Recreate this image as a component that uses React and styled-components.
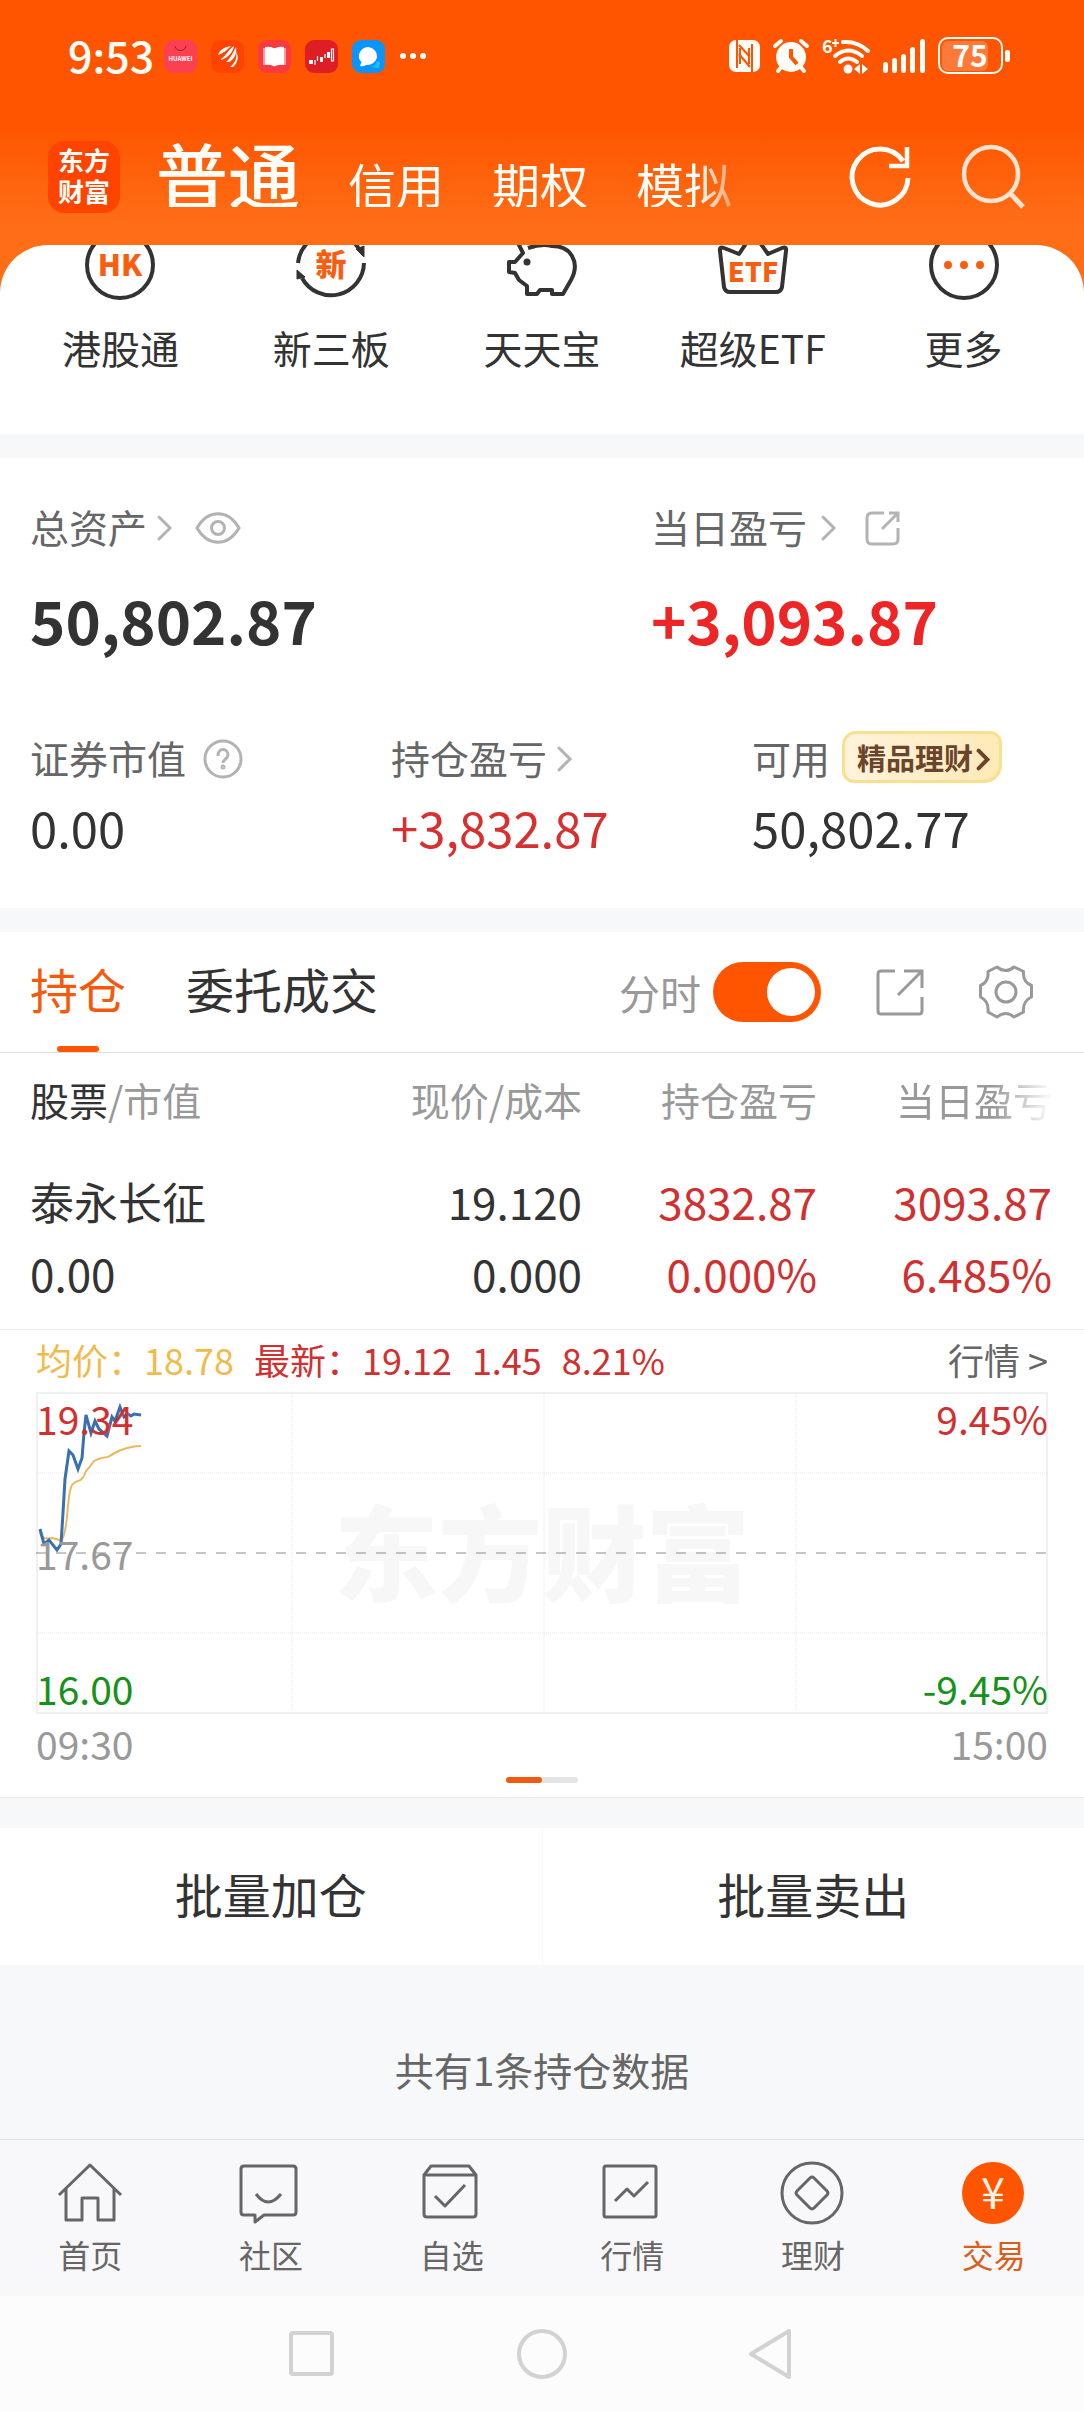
import { useState } from "react";
import styled, { createGlobalStyle, css } from "styled-components";

const GlobalStyle = createGlobalStyle`
  * {
    box-sizing: border-box;
  }
  body {
    margin: 0;
    background-color: #f7f8fa;
    color: #333;
    font-family: "Noto Sans CJK SC", "Noto Sans", sans-serif;
  }
  button {
    padding: 0;
    border: none;
    background: none;
    color: inherit;
    font: inherit;
    cursor: pointer;
  }
  a {
    color: inherit;
    text-decoration: none;
  }
  svg {
    display: block;
    flex-shrink: 0;
    overflow: visible;
  }
`;

const Page = styled.div`
  display: flex;
  flex-direction: column;
  min-height: 100vh;
`;

/* ---------- header ---------- */

const Header = styled.header`
  color: #fffdf8;
  background: linear-gradient(#ff5500 0%, #ff5500 52%, #ff6e17 92%);
`;

const StatusBar = styled.div`
  display: flex;
  justify-content: space-between;
  padding: 36px 74px 0 68px;
`;

const StatusGroup = styled.div`
  display: flex;
  align-items: center;
  gap: ${({ $gap }) => $gap}px;
  height: 40px;
`;

const Clock = styled.time`
  height: 40px;
  margin-right: -4px;
  font-size: 43px;
  font-weight: 500;
  line-height: 36px;
`;

const TopNav = styled.div`
  display: flex;
  padding: 65px 59px 32px 48px;
`;

const Logo = styled.a`
  width: 72px;
  height: 72px;
  padding: 3px 10px;
  margin-right: 36px;
  border-radius: 16px;
  background-color: #ff4400;
  font-size: 26px;
  font-weight: 700;
  line-height: 31px;
`;

const AccountTabs = styled.nav`
  display: flex;
  align-items: baseline;
  align-self: flex-start;
  gap: 48px;
  margin-right: auto;
  white-space: nowrap;
  mask-image: linear-gradient(to right, #000 94%, rgba(0, 0, 0, 0.4) 100%);
`;

const AccountTab = styled.button`
  font-size: ${({ $active }) => ($active ? 72 : 48)}px;
  font-weight: ${({ $active }) => ($active ? 500 : 400)};
  line-height: ${({ $active }) => ($active ? 64 : 48)}px;
`;

const TopActions = styled.div`
  display: flex;
  align-items: center;
  gap: 49px;
`;

/* ---------- services ---------- */

const ServicesWrap = styled.div`
  background-color: #ff6e17;
`;

const Services = styled.nav`
  display: grid;
  grid-template-columns: repeat(5, 1fr);
  padding: 0 15px 67px;
  border-radius: 48px 48px 0 0;
  background-color: #fff;
  overflow: hidden;
`;

const Service = styled.a`
  display: flex;
  flex-direction: column;
  align-items: center;
  gap: 26px;
  margin-top: -16px;
  font-size: 39px;
  line-height: 40px;
`;

/* ---------- assets ---------- */

const Assets = styled.section`
  margin-top: 24px;
  padding: 48px 0 51px 30px;
  background-color: #fff;
`;

const AssetsTop = styled.div`
  display: grid;
  grid-template-columns: 621px 1fr;
  margin-bottom: 76px;
`;

const AssetsBottom = styled.div`
  display: grid;
  grid-template-columns: 361px 361px 1fr;
`;

const LabelRow = styled.div`
  display: flex;
  align-items: center;
  height: ${({ $tall }) => ($tall ? 52 : 40)}px;
  color: #666;
  font-size: 39px;
  line-height: 40px;

  svg {
    margin-top: 4px;
  }
`;

const LabelLink = styled.a`
  display: flex;
  align-items: center;
  gap: ${({ $gap }) => $gap || 10}px;
  margin-right: ${({ $after }) => $after || 0}px;
`;

const BigValue = styled.div`
  margin-top: 37px;
  color: ${({ $up }) => ($up ? "#ee2525" : "#333")};
  font-size: 60px;
  font-weight: 700;
  line-height: 72px;
`;

const Value = styled.div`
  margin-top: 14px;
  color: ${({ $up }) => ($up ? "#d82f2f" : "#333")};
  font-size: 49px;
  line-height: 60px;
`;

const Promo = styled.a`
  display: flex;
  align-items: center;
  gap: 4px;
  height: 52px;
  margin-left: 12px;
  padding: 0 10px 0 12px;
  border: 3px solid #f9e08f;
  border-radius: 14px 12px 18px 12px;
  background: linear-gradient(100deg, #fff3dc, #ffe9b6);
  color: #6b452b;
  font-size: 29px;
  font-weight: 700;
`;

/* ---------- positions ---------- */

const Positions = styled.section`
  margin-top: 24px;
  border-bottom: 1px solid #ececec;
  background-color: #fff;
`;

const PositionsBar = styled.div`
  display: flex;
  align-items: center;
  justify-content: space-between;
  padding: 0 51px 0 30px;
  border-bottom: 1px solid #dedede;
`;

const Tabs = styled.div`
  display: flex;
  gap: 60px;
`;

const Tab = styled.button`
  position: relative;
  padding: 24px 0 32px;
  font-size: 48px;
  line-height: 64px;

  ${({ $active }) =>
    $active &&
    css`
      color: #f45a0c;

      &::after {
        content: "";
        position: absolute;
        left: 50%;
        bottom: 0;
        width: 42px;
        height: 6px;
        margin-left: -21px;
        border-radius: 3px;
        background-color: #ff5500;
      }
    `}
`;

const Tools = styled.div`
  display: flex;
  align-items: center;
  gap: 55px;
`;

const SwitchLabel = styled.label`
  display: flex;
  align-items: center;
  gap: 12px;
  color: #999;
  font-size: 41px;
  line-height: 56px;
`;

const Switch = styled.input`
  appearance: none;
  width: 108px;
  height: 60px;
  margin: 0;
  padding: 6px;
  border-radius: 30px;
  background-color: ${({ checked }) => (checked ? "#ff5500" : "#ddd")};

  &::before {
    content: "";
    display: block;
    width: 48px;
    height: 48px;
    margin-left: ${({ checked }) => (checked ? 48 : 0)}px;
    border-radius: 50%;
    background-color: #fff;
  }
`;

const Table = styled.table`
  width: 100%;
  border-bottom: 1px solid #ececec;
  border-spacing: 0;
  table-layout: fixed;

  th,
  td {
    padding: 0;
    text-align: right;
    white-space: nowrap;
  }
  th {
    padding: 26px 0 29px;
    color: #999;
    font-size: 39px;
    font-weight: 400;
    line-height: 40px;
  }
  td {
    padding: 17px 0 20px;
    font-size: 44px;
    line-height: 72px;
  }
  th:first-child,
  td:first-child {
    padding-left: 30px;
    text-align: left;
  }
  th:last-child,
  td:last-child {
    width: 267px;
    padding-right: 32px;
  }
  th:last-child {
    mask-image: linear-gradient(to right, #000 66%, rgba(0, 0, 0, 0.1) 86%);
  }
`;

const MidCol = styled.th`
  width: 235px;
`;

const Strong = styled.span`
  color: #333;
`;

const Figures = styled.td`
  color: ${({ $up }) => ($up ? "#d13030" : "#333")};
`;

/* ---------- intraday chart ---------- */

const Quote = styled.div`
  padding: 0 36px 14px;
`;

const QuoteHead = styled.div`
  display: flex;
  margin-bottom: 4px;
  color: #d13030;
  font-size: 36px;
  line-height: 58px;
  white-space: nowrap;
`;

const QuoteItem = styled.span`
  margin-right: 20px;
  color: ${({ $avg }) => ($avg ? "#f0bb4d" : "inherit")};
`;

const QuoteLink = styled.a`
  margin-left: auto;
  color: #666;
`;

const Plot = styled.div`
  position: relative;
  display: flex;
  align-items: center;
  justify-content: center;
  height: 322px;
`;

const Watermark = styled.span`
  padding-bottom: 8px;
  color: #f7f7f7;
  font-size: 104px;
  font-weight: 900;
  line-height: 110px;
`;

const PlotLines = styled.svg`
  position: absolute;
  inset: 0;
  width: 100%;
  height: 100%;
`;

const Axis = styled.div`
  position: absolute;
  top: 2px;
  bottom: 2px;
  ${({ $side }) => $side}: 0;
  display: flex;
  flex-direction: column;
  justify-content: space-between;
  text-align: ${({ $side }) => $side};
  font-size: 39px;
  line-height: 48px;
`;

const AxisLabel = styled.span`
  color: ${({ $tone }) =>
    ({ up: "#d13030", flat: "#999", down: "#16921a" })[$tone]};
`;

const Times = styled.div`
  display: flex;
  justify-content: space-between;
  color: #999;
  font-size: 39px;
  line-height: 58px;
`;

const Pager = styled.div`
  display: flex;
  width: 72px;
  height: 6px;
  margin: 5px auto 0;
  border-radius: 3px;
  background-color: #e4e4e4;

  &::before {
    content: "";
    width: 36px;
    border-radius: 3px;
    background-color: #ee5a10;
  }
`;

/* ---------- bottom ---------- */

const BatchBar = styled.div`
  display: flex;
  margin-top: 30px;
  background-color: #fff;
`;

const BatchButton = styled.button`
  flex: 1;
  padding: 33px 0 40px;
  font-size: 48px;
  line-height: 64px;

  & + & {
    border-left: 1px solid #f8f8f8;
  }
`;

const Summary = styled.p`
  flex: 1;
  margin: 0;
  padding: 84px 0 48px;
  color: #666;
  font-size: 39px;
  line-height: 40px;
  text-align: center;
`;

const TabBar = styled.nav`
  display: grid;
  grid-template-columns: repeat(6, 1fr);
  padding: 22px 0;
  border-top: 1px solid #dfe2e5;
  background-color: #f8f8fa;
`;

const TabBarItem = styled.a`
  display: flex;
  flex-direction: column;
  align-items: center;
  gap: 8px;
  color: ${({ $active }) => ($active ? "#d9601a" : "#666")};
  font-size: 32px;
  line-height: 40px;
`;

const SystemNav = styled.div`
  display: flex;
  justify-content: center;
  gap: 180px;
  padding: 33px 0;
  background-color: #fcfcfc;
`;

/* ---------- icons ---------- */

const AppIcons = () => (
  <>
    <svg width="33" height="33" viewBox="0 0 33 33">
      <rect width="33" height="33" rx="9" fill="#fb4052" />
      <path d="M11 6c1 6 10 6 11 0" fill="none" stroke="#8c2430" />
      <text x="16.5" y="21" fontSize="6" fontWeight="700" textAnchor="middle" fill="#fff">
        HUAWEI
      </text>
    </svg>
    <svg width="33" height="33" viewBox="0 0 33 33">
      <rect width="33" height="33" rx="9" fill="#ff4400" />
      <path
        d="M7 15C9 9 14 7 20 6C16 10 13 13 7 15ZM10 19C15 16 17 10 23 6C22 12 17 18 10 20ZM15 22C20 18 22 12 25 7C26 13 24 19 18 22ZM19 27C25 22 26 17 25 12C28 16 27 23 22 27Z"
        fill="#fff"
      />
    </svg>
    <svg width="33" height="33" viewBox="0 0 33 33">
      <rect width="33" height="33" rx="9" fill="#fb3a40" />
      <path d="M5 8h23v17H5z" fill="#ff9a9a" />
      <path d="M7 7q6-1 9.500 1.500Q20 6 26 7v18q-6-1-9.500 1.500Q13 24 7 25z" fill="#fff" />
    </svg>
    <svg width="33" height="33" viewBox="0 0 33 33">
      <rect width="33" height="33" rx="9" fill="#df1d24" />
      <path d="M4 20h4v4H4zM15 17h3v5h-3zM22 12h3v6h-3z" fill="#fff" />
      <path
        d="M10 20v5M12.500 16v5M20 14v4M26.500 9h2v12h-2z"
        fill="none"
        stroke="#fff"
        strokeWidth="1.200"
      />
    </svg>
    <svg width="33" height="33" viewBox="0 0 33 33">
      <rect width="33" height="33" rx="9" fill="#0a95fc" />
      <path d="M19 27q5-1 6-6l3 2-1 5z" fill="#17c3ff" />
      <path d="M16 7a10 9 0 1 1-2 18q-3 2-6 1l1.500-4A10 9 0 0 1 16 7Z" fill="#fff" />
    </svg>
  </>
);

const MoreDots = () => (
  <svg width="28" height="8" viewBox="0 0 28 8" fill="currentColor">
    <circle cx="4" cy="4" r="3" />
    <circle cx="14" cy="4" r="3" />
    <circle cx="24" cy="4" r="3" />
  </svg>
);

const StatusIcons = () => (
  <>
    <svg width="31" height="32" viewBox="0 0 31 32">
      <rect width="31" height="32" rx="7" fill="currentColor" />
      <path
        d="M8 0V28M23 4V32M11 8V24M20 8V24M10 5L21 17M10 14L21 27"
        stroke="#ff5500"
        strokeWidth="2"
        fill="none"
      />
    </svg>
    <svg width="36" height="34" viewBox="0 0 36 34">
      <circle cx="18" cy="18" r="15" fill="currentColor" />
      <path
        d="M2 7L8 2M28 2L34 7M5 32L9 27M31 32L27 27"
        stroke="currentColor"
        strokeWidth="4"
        strokeLinecap="round"
      />
      <path d="M18 10V18L24 25" fill="none" stroke="#ff5500" strokeWidth="4" />
    </svg>
    <svg width="48" height="36" viewBox="0 0 48 36">
      <text x="0" y="15" fontSize="18" fontWeight="700" fill="currentColor">
        6
      </text>
      <path d="M10 5H17M13.500 1V9" stroke="currentColor" strokeWidth="2" />
      <g fill="none" stroke="currentColor" strokeWidth="4" strokeLinecap="round">
        <path d="M21 4Q36 3 46 13" />
        <path d="M13 18Q26 7 40 18" />
        <path d="M18 24Q26 17 35 24" />
      </g>
      <circle cx="26" cy="31" r="4.500" fill="currentColor" />
      <path d="M32 31L38 26V36ZM46 31L40 26V36Z" fill="currentColor" />
    </svg>
    <svg width="42" height="34" viewBox="0 0 42 34" fill="currentColor">
      <rect x="0" y="23" width="5" height="11" rx="2.500" />
      <rect x="9" y="19" width="5" height="15" rx="2.500" />
      <rect x="18" y="15" width="5" height="19" rx="2.500" />
      <rect x="27" y="8" width="5" height="26" rx="2.500" />
      <rect x="37" y="0" width="5" height="34" rx="2.500" />
    </svg>
    <svg width="72" height="38" viewBox="0 0 72 38">
      <rect x="4" y="4" width="46" height="30" rx="6" fill="#fff" opacity="0.22" />
      <rect
        x="1"
        y="1"
        width="63"
        height="35"
        rx="9"
        fill="none"
        stroke="currentColor"
        strokeWidth="2"
      />
      <rect x="67" y="13" width="5" height="12" rx="2" fill="currentColor" />
      <text x="32" y="30" fontSize="30" fontWeight="700" textAnchor="middle" fill="currentColor">
        75
      </text>
    </svg>
  </>
);

const RefreshIcon = () => (
  <svg width="64" height="64" viewBox="0 0 64 64" fill="none" stroke="currentColor">
    <path d="M60 33A28 28 0 1 1 55 16" strokeWidth="5" />
    <path d="M59 2V21H41" strokeWidth="4.500" />
  </svg>
);

const SearchIcon = () => (
  <svg width="64" height="64" viewBox="0 0 64 64" fill="none" stroke="#ffe3cf">
    <circle cx="30" cy="29" r="27" strokeWidth="4.500" />
    <path d="M48 47L62 62" strokeWidth="5" />
  </svg>
);

const Chevron = ({ color = "#b3b3b3", width = 15, height = 26, stroke = 3 }) => (
  <svg width={width} height={height} viewBox="0 0 15 26" fill="none">
    <path
      d="M2 2L13 13L2 24"
      stroke={color}
      strokeWidth={stroke}
      strokeLinecap="round"
      vectorEffect="non-scaling-stroke"
    />
  </svg>
);

const EyeIcon = () => (
  <svg width="46" height="32" viewBox="0 0 46 32" fill="none" stroke="#b3b3b3" strokeWidth="3">
    <path d="M2 16C13 -3 33 -3 44 16C33 35 13 35 2 16Z" />
    <circle cx="23" cy="16" r="6.500" />
  </svg>
);

const HelpIcon = () => (
  <svg width="40" height="40" viewBox="0 0 40 40" fill="none" stroke="#b3b3b3" strokeWidth="3">
    <circle cx="20" cy="20" r="18" />
    <path d="M15 17C15 8 25 9 25 16C25 20 20 20 20 24" />
    <circle cx="20" cy="28" r="1" />
  </svg>
);

const ShareSmallIcon = () => (
  <svg width="36" height="36" viewBox="0 0 36 36" fill="none" stroke="#b3b3b3" strokeWidth="3">
    <path d="M19 3H7Q2 3 2 8V29Q2 34 7 34H28Q33 34 33 29V18" />
    <path d="M17 19L33 3M24 3H33V12" />
  </svg>
);

const ShareIcon = () => (
  <svg width="48" height="48" viewBox="0 0 48 48" fill="none" stroke="#999" strokeWidth="3">
    <path d="M19 3H5Q2 3 2 6V43Q2 46 5 46H43Q46 46 46 43V29" />
    <path d="M22 27L45 4M28 3H46V20" />
  </svg>
);

const GearIcon = () => (
  <svg width="54" height="54" viewBox="0 0 54 54" fill="none" stroke="#999" strokeWidth="3">
    <path
      d="M18 2Q27 9 35 2L44.500 6.500Q43.500 17 52.500 20.500V32Q43.500 36 44.500 47L35 52Q27 45 18 52L9 47Q10 36 1.500 32V20.500Q10 17 9 6.500Z"
      strokeLinejoin="round"
    />
    <circle cx="27" cy="27" r="10" />
  </svg>
);

const ServiceSvg = styled.svg.attrs({
  width: 72,
  height: 72,
  viewBox: "0 0 72 72",
})`
  fill: none;
  stroke: #333;
  stroke-width: 4px;
  stroke-linejoin: round;

  text {
    fill: #f95e10;
    stroke: none;
    font-weight: 900;
    text-anchor: middle;
  }
`;

const serviceIcons = {
  hk: (
    <ServiceSvg>
      <circle cx="36" cy="36" r="33" />
      <text x="36" y="47" fontSize="30">
        HK
      </text>
    </ServiceSvg>
  ),
  neeq: (
    <ServiceSvg>
      <path d="M3 34A33 33 0 0 1 64 20M69 34A33 33 0 0 1 7 49" />
      <path d="M61 20L69 17V28ZM2 41L10 48L2 50Z" fill="#333" strokeWidth="1" />
      <text x="36" y="47" fontSize="31">
        新
      </text>
    </ServiceSvg>
  ),
  pig: (
    <ServiceSvg>
      <path d="M10 10L17 24L9 33H3V43L9 44L13 51L21 57V65H31L34 61H46V65H57L65 51C70 42 70 34 66 27C62 20 54 17 46 17C38 15 28 17 22 19" />
      <circle cx="21" cy="33" r="3.500" fill="#333" stroke="none" />
    </ServiceSvg>
  ),
  etf: (
    <ServiceSvg>
      <path d="M7 19L22 25L36 4L51 25L65 19Q70 17 69 22L65 58Q64 63 59 63H13Q8 63 7 58L3 22Q2 17 7 19Z" />
      <text x="36" y="53" fontSize="27">
        ETF
      </text>
    </ServiceSvg>
  ),
  more: (
    <ServiceSvg>
      <circle cx="36" cy="36" r="33" />
      <g fill="#f95e10" stroke="none">
        <circle cx="20" cy="36" r="4" />
        <circle cx="36" cy="36" r="4" />
        <circle cx="52" cy="36" r="4" />
      </g>
    </ServiceSvg>
  ),
};

const TabSvg = styled.svg.attrs({
  width: 64,
  height: 64,
  viewBox: "0 0 64 64",
})`
  fill: none;
  stroke: #666;
  stroke-width: 3px;
  stroke-linejoin: round;
`;

const tabIcons = {
  home: (
    <TabSvg>
      <path d="M1 33L32 3L63 33M8 27V58H24V36H40V58H56V27" />
    </TabSvg>
  ),
  community: (
    <TabSvg>
      <path d="M5 4H54Q57 4 57 7V50Q57 53 54 53H25L16 60V53H5Q2 53 2 50V7Q2 4 5 4Z" />
      <path d="M17 32Q29 48 42 32" />
    </TabSvg>
  ),
  watchlist: (
    <TabSvg>
      <path d="M4 13L11 4H49L56 13V52Q56 55 53 55H7Q4 55 4 52ZM4 13H56M15 34L25 44L45 23" />
    </TabSvg>
  ),
  market: (
    <TabSvg>
      <rect x="4" y="4" width="52" height="51" rx="2" />
      <path d="M15 39L27 27L34 34L48 20" />
    </TabSvg>
  ),
  wealth: (
    <TabSvg>
      <circle cx="31" cy="31" r="30" />
      <path d="M29 16Q31 14 33 16L46 29Q48 31 46 33L33 46Q31 48 29 46L16 33Q14 31 16 29Z" />
    </TabSvg>
  ),
  trade: (
    <TabSvg>
      <circle cx="31" cy="31" r="31" fill="#ff5500" stroke="none" />
      <text x="31" y="47" fontSize="43" textAnchor="middle" fill="#fff3e6" stroke="none">
        ¥
      </text>
    </TabSvg>
  ),
};

/* ---------- data ---------- */

const accounts = ["普通", "信用", "期权", "模拟"];

const services = [
  { icon: "hk", label: "港股通" },
  { icon: "neeq", label: "新三板" },
  { icon: "pig", label: "天天宝" },
  { icon: "etf", label: "超级ETF" },
  { icon: "more", label: "更多" },
];

const positions = [
  {
    name: "泰永长征",
    marketValue: "0.00",
    price: "19.120",
    cost: "0.000",
    profit: "3832.87",
    profitRate: "0.000%",
    dayProfit: "3093.87",
    dayRate: "6.485%",
  },
];

const tabBar = [
  { icon: "home", label: "首页" },
  { icon: "community", label: "社区" },
  { icon: "watchlist", label: "自选" },
  { icon: "market", label: "行情" },
  { icon: "wealth", label: "理财" },
  { icon: "trade", label: "交易" },
];

const priceLine =
  "4,137 8,152 13,148 21,158 25,152 27,121 29,87 33,59 37,63 42,77 46,66 48,41 50,23 55,41 59,29 63,37 71,44 76,25 79,29 84,15 88,25 92,22 95,24 98,22 105,23";

const averageLine =
  "M4 141Q6 148 16 146Q22 147 25 149Q29 145 31 125Q33 98 36 93Q38 90 42 89Q47 88 50 79Q54 75 58 69Q63 66 72 65Q80 60 85 58Q96 54 105 54";

const IntradayChart = () => (
  <Quote>
    <QuoteHead>
      <QuoteItem $avg>均价：18.78</QuoteItem>
      <QuoteItem>最新：19.12</QuoteItem>
      <QuoteItem>1.45</QuoteItem>
      <QuoteItem>8.21%</QuoteItem>
      <QuoteLink href="#quote">行情 &gt;</QuoteLink>
    </QuoteHead>
    <Plot>
      <Watermark>东方财富</Watermark>
      <PlotLines viewBox="0 0 1012 322" preserveAspectRatio="none" fill="none">
        <rect x="1" y="1" width="1010" height="320" stroke="#f0f0f0" strokeWidth="2" />
        <path
          d="M0 81H1012M0 241H1012M256 0V322M508 0V322M760 0V322"
          stroke="#e8e8e8"
          strokeDasharray="1 1"
        />
        <path d="M0 161H1012" stroke="#8c8c8c" strokeDasharray="10 10" />
        <path d={averageLine} stroke="#eab95c" strokeWidth="2" />
        <polyline points={priceLine} stroke="#3a6fb0" strokeWidth="3" />
      </PlotLines>
      <Axis $side="left">
        <AxisLabel $tone="up">19.34</AxisLabel>
        <AxisLabel $tone="flat">17.67</AxisLabel>
        <AxisLabel $tone="down">16.00</AxisLabel>
      </Axis>
      <Axis $side="right">
        <AxisLabel $tone="up">9.45%</AxisLabel>
        <AxisLabel $tone="down">-9.45%</AxisLabel>
      </Axis>
    </Plot>
    <Times>
      <span>09:30</span>
      <span>15:00</span>
    </Times>
    <Pager />
  </Quote>
);

const App = () => {
  const [account, setAccount] = useState("普通");
  const [tab, setTab] = useState("持仓");
  const [showChart, setShowChart] = useState(true);

  return (
    <Page>
      <GlobalStyle />
      <Header>
        <StatusBar>
          <StatusGroup $gap={14}>
            <Clock>9:53</Clock>
            <AppIcons />
            <MoreDots />
          </StatusGroup>
          <StatusGroup $gap={13}>
            <StatusIcons />
          </StatusGroup>
        </StatusBar>
        <TopNav>
          <Logo href="#home">
            东方
            <br />
            财富
          </Logo>
          <AccountTabs>
            {accounts.map((name) => (
              <AccountTab
                key={name}
                $active={name === account}
                onClick={() => setAccount(name)}
              >
                {name}
              </AccountTab>
            ))}
          </AccountTabs>
          <TopActions>
            <button aria-label="刷新">
              <RefreshIcon />
            </button>
            <button aria-label="搜索">
              <SearchIcon />
            </button>
          </TopActions>
        </TopNav>
      </Header>

      <ServicesWrap>
        <Services>
          {services.map((s) => (
            <Service href={`#${s.icon}`} key={s.icon}>
              {serviceIcons[s.icon]}
              {s.label}
            </Service>
          ))}
        </Services>
      </ServicesWrap>

      <Assets>
        <AssetsTop>
          <div>
            <LabelRow>
              <LabelLink href="#total" $after={23}>
                总资产
                <Chevron />
              </LabelLink>
              <button aria-label="隐藏金额">
                <EyeIcon />
              </button>
            </LabelRow>
            <BigValue>50,802.87</BigValue>
          </div>
          <div>
            <LabelRow>
              <LabelLink href="#today" $gap={14} $after={29}>
                当日盈亏
                <Chevron />
              </LabelLink>
              <button aria-label="分享">
                <ShareSmallIcon />
              </button>
            </LabelRow>
            <BigValue $up>+3,093.87</BigValue>
          </div>
        </AssetsTop>
        <AssetsBottom>
          <div>
            <LabelRow $tall>
              <LabelLink as="span" $after={17}>
                证券市值
              </LabelLink>
              <button aria-label="说明">
                <HelpIcon />
              </button>
            </LabelRow>
            <Value>0.00</Value>
          </div>
          <div>
            <LabelRow $tall>
              <LabelLink href="#profit">
                持仓盈亏
                <Chevron />
              </LabelLink>
            </LabelRow>
            <Value $up>+3,832.87</Value>
          </div>
          <div>
            <LabelRow $tall>
              可用
              <Promo href="#wealth">
                精品理财
                <Chevron color="#6b452b" width={12} height={21} stroke={4} />
              </Promo>
            </LabelRow>
            <Value>50,802.77</Value>
          </div>
        </AssetsBottom>
      </Assets>

      <Positions>
        <PositionsBar>
          <Tabs>
            {["持仓", "委托成交"].map((name) => (
              <Tab
                key={name}
                $active={name === tab}
                onClick={() => setTab(name)}
              >
                {name}
              </Tab>
            ))}
          </Tabs>
          <Tools>
            <SwitchLabel>
              分时
              <Switch
                type="checkbox"
                role="switch"
                checked={showChart}
                onChange={(e) => setShowChart(e.target.checked)}
              />
            </SwitchLabel>
            <button aria-label="分享持仓">
              <ShareIcon />
            </button>
            <button aria-label="设置">
              <GearIcon />
            </button>
          </Tools>
        </PositionsBar>

        <Table>
          <thead>
            <tr>
              <th>
                <Strong>股票</Strong>/市值
              </th>
              <MidCol>现价/成本</MidCol>
              <MidCol>持仓盈亏</MidCol>
              <th>当日盈亏</th>
            </tr>
          </thead>
          <tbody>
            {positions.map((p) => (
              <tr key={p.name}>
                <Figures>
                  {p.name}
                  <br />
                  {p.marketValue}
                </Figures>
                <Figures>
                  {p.price}
                  <br />
                  {p.cost}
                </Figures>
                <Figures $up>
                  {p.profit}
                  <br />
                  {p.profitRate}
                </Figures>
                <Figures $up>
                  {p.dayProfit}
                  <br />
                  {p.dayRate}
                </Figures>
              </tr>
            ))}
          </tbody>
        </Table>

        {showChart && <IntradayChart />}
      </Positions>

      <BatchBar>
        <BatchButton>批量加仓</BatchButton>
        <BatchButton>批量卖出</BatchButton>
      </BatchBar>

      <Summary>共有{positions.length}条持仓数据</Summary>

      <TabBar>
        {tabBar.map((t) => (
          <TabBarItem
            href={`#${t.icon}`}
            key={t.icon}
            $active={t.icon === "trade"}
          >
            {tabIcons[t.icon]}
            {t.label}
          </TabBarItem>
        ))}
      </TabBar>

      <SystemNav>
        <button aria-label="最近任务">
          <svg width="50" height="50" viewBox="0 0 50 50" fill="none">
            <rect x="4" y="4" width="41" height="41" rx="2" stroke="#d2d2d2" strokeWidth="4" />
          </svg>
        </button>
        <button aria-label="主屏幕">
          <svg width="50" height="50" viewBox="0 0 50 50" fill="none">
            <circle cx="25" cy="25" r="23" stroke="#d2d2d2" strokeWidth="4" />
          </svg>
        </button>
        <button aria-label="返回">
          <svg width="50" height="50" viewBox="0 0 50 50" fill="none">
            <path
              d="M4 25L42 2V48Z"
              stroke="#d2d2d2"
              strokeWidth="4"
              strokeLinejoin="round"
            />
          </svg>
        </button>
      </SystemNav>
    </Page>
  );
};

export default App;
